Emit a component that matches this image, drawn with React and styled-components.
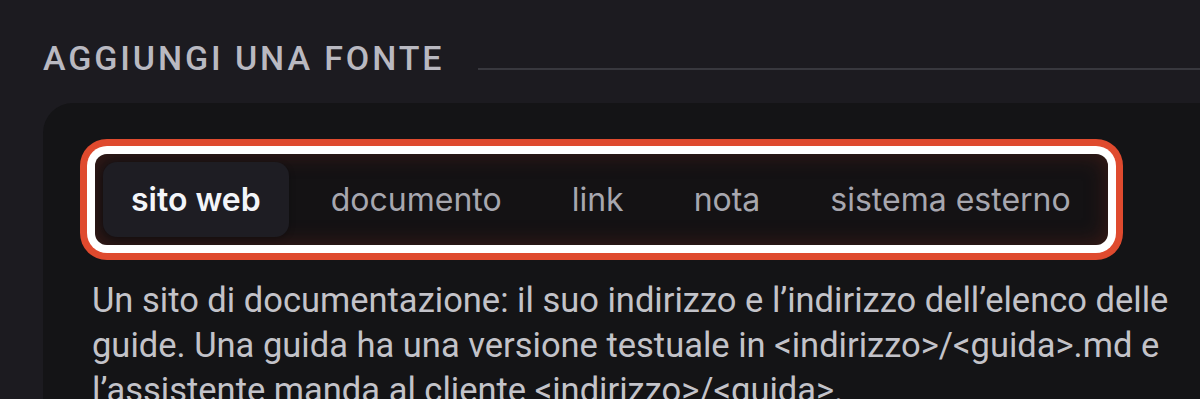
import React from 'react';
import styled, { createGlobalStyle } from 'styled-components';

const GlobalStyle = createGlobalStyle`
  html, body {
    margin: 0;
    padding: 0;
    background: #1c1b20;
    overflow: hidden;
  }
`;

const Page = styled.div`
  width: 1300px;
  padding: 38px 0 0 43px;
  box-sizing: border-box;
`;

const SectionHeader = styled.div`
  display: flex;
  align-items: flex-end;
  gap: 34px;
`;

const SectionTitle = styled.h2`
  margin: 0;
  font-family: Roboto, "Liberation Sans", sans-serif;
  font-size: 34px;
  font-weight: 500;
  line-height: normal;
  letter-spacing: 2.9px;
  text-transform: uppercase;
  color: #b9b9c1;
  white-space: nowrap;
`;

const Rule = styled.div`
  flex: 1;
  height: 2px;
  margin-bottom: 8px;
  background: #38383e;
`;

const Card = styled.div`
  margin-top: 25px;
  background: #141416;
  border-radius: 30px;
  padding: 51px 52px 40px;
  min-height: 400px;
`;

const TabList = styled.div`
  display: inline-flex;
  gap: 14px;
  padding: 8px 9px 8px 8px;
  border-radius: 12px;
  background: #141214;
  box-shadow:
    inset 0 0 22px rgba(110, 38, 24, 0.45),
    0 0 0 8px #ffffff,
    0 0 0 15px #df4a2e;
`;

const Tab = styled.button`
  border: none;
  background: ${p => (p.$active ? '#1e1d23' : 'transparent')};
  color: ${p => (p.$active ? '#f3f5f9' : '#a7a7af')};
  font-family: Inter, "Liberation Sans", sans-serif;
  font-size: 32px;
  font-weight: ${p => (p.$active ? 600 : 400)};
  height: 75px;
  padding: 0 28px;
  border-radius: 14px;
  cursor: pointer;
  box-shadow: ${p => (p.$active ? '0 2px 6px rgba(0,0,0,0.25)' : 'none')};
`;

const Description = styled.p`
  margin: 33px 0 0 -3px;
  max-width: 1090px;
  font-family: Roboto, "Liberation Sans", sans-serif;
  font-size: 34.5px;
  line-height: 45px;
  color: #c3c3c9;
`;

const tabs = ['sito web', 'documento', 'link', 'nota', 'sistema esterno'];

export default function App() {
  return (
    <>
      <GlobalStyle />
      <Page>
        <SectionHeader>
          <SectionTitle>Aggiungi una fonte</SectionTitle>
          <Rule />
        </SectionHeader>
        <Card>
          <TabList>
            {tabs.map((t, i) => (
              <Tab key={t} $active={i === 0}>{t}</Tab>
            ))}
          </TabList>
          <Description>
            Un sito di documentazione: il suo indirizzo e l’indirizzo dell’elenco delle
            guide. Una guida ha una versione testuale in &lt;indirizzo&gt;/&lt;guida&gt;.md e
            l’assistente manda al cliente &lt;indirizzo&gt;/&lt;guida&gt;.
          </Description>
        </Card>
      </Page>
    </>
  );
}
